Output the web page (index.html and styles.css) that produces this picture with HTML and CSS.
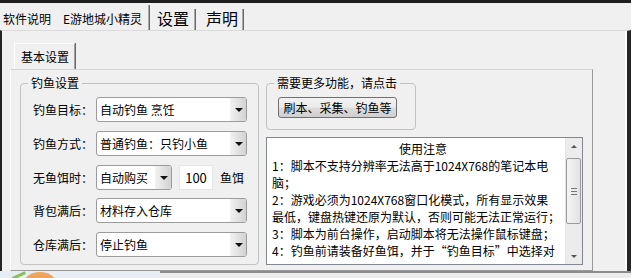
FILE: index.html
```html
<!DOCTYPE html>
<html lang="zh-CN">
<head>
    <meta charset="UTF-8">
    <title>E游地城小精灵</title>
    <link rel="stylesheet" href="styles.css">
</head>
<body>
    <div class="titlebar"></div>
    <div class="tabs">
        <div class="tab first">软件说明</div>
        <div class="tab active">E游地城小精灵</div>
        <div class="tab big">设置</div>
        <div class="tab big last">声明</div>
    </div>

    <div class="frame">
        <div class="subtabs">
            <div class="subtab">基本设置</div>
        </div>
        <div class="page">
            <div class="group fish">
                <span class="group-title">钓鱼设置</span>
                <div class="row">
                    <span class="label">钓鱼目标：</span>
                    <div class="combo"><span>自动钓鱼 烹饪</span><i class="drop"></i></div>
                </div>
                <div class="row">
                    <span class="label">钓鱼方式：</span>
                    <div class="combo"><span>普通钓鱼：只钓小鱼</span><i class="drop"></i></div>
                </div>
                <div class="row">
                    <span class="label">无鱼饵时：</span>
                    <div class="combo small"><span>自动购买</span><i class="drop"></i></div>
                    <div class="textbox">100</div>
                    <span class="unit">鱼饵</span>
                </div>
                <div class="row">
                    <span class="label">背包满后：</span>
                    <div class="combo"><span>材料存入仓库</span><i class="drop"></i></div>
                </div>
                <div class="row">
                    <span class="label">仓库满后：</span>
                    <div class="combo"><span>停止钓鱼</span><i class="drop"></i></div>
                </div>
            </div>

            <div class="side">
                <div class="group more">
                    <span class="group-title">需要更多功能，请点击</span>
                    <button class="btn">刷本、采集、钓鱼等</button>
                </div>
                <div class="notes">
                    <div class="notes-text">
                        <div class="notes-title">使用注意</div>
                        <div>1：脚本不支持分辨率无法高于1024X768的笔记本电</div>
                        <div>脑；</div>
                        <div>2：游戏必须为1024X768窗口化模式，所有显示效果</div>
                        <div>最低，键盘热键还原为默认，否则可能无法正常运行；</div>
                        <div>3：脚本为前台操作，启动脚本将无法操作鼠标键盘；</div>
                        <div>4：钓鱼前请装备好鱼饵，并于“钓鱼目标”中选择对</div>
                    </div>
                    <div class="scrollbar">
                        <div class="arrow up"></div>
                        <div class="thumb"><i></i><i></i><i></i></div>
                        <div class="track"></div>
                        <div class="arrow down"></div>
                    </div>
                </div>
            </div>
        </div>
    </div>

    <div class="footer">
        <div class="footer-pic"><span class="leaf"></span><span class="sun"></span></div>
        <div class="footer-rest"></div>
    </div>
</body>
</html>
```

FILE: styles.css
```css
* {
    box-sizing: border-box;
}
body {
    margin: 0;
    width: 631px;
    height: 278px;
    overflow: hidden;
    background-color: #f0f0f0;
    color: #000;
    font-family: "Noto Sans CJK SC", "Microsoft YaHei", sans-serif;
    font-size: 12px;
}
.titlebar {
    height: 3px;
    background-color: #1f1f1f;
}

/* top tab strip */
.tabs {
    display: flex;
    align-items: flex-end;
    height: 27px;
}
.tab {
    height: 21px;
    line-height: 20px;
    padding: 0 6px 0 8px;
    border-right: 1px solid #a9a9a9;
    box-shadow: 1px 0 0 #6a6a6a;
    white-space: nowrap;
}
.tab.first {
    width: 55px;
    padding-left: 3px;
    border-right: none;
    box-shadow: none;
}
.tab.active {
    width: 94px;
    height: 25px;
    line-height: 28px;
}
.tab.big {
    width: 46px;
    font-size: 16px;
    line-height: 19px;
    padding: 0 0 0 8px;
}
.tab.last {
    width: 48px;
    padding-left: 11px;
}

/* outer frame */
.frame {
    display: flex;
    flex-direction: column;
    height: 241px;
    padding: 12px 34px 0 8px;
    border-top: 1px solid #dadada;
    border-left: 2px solid #262626;
    border-right: 4px solid #262626;
    box-shadow: inset -2px 0 0 #fff;
}
.subtabs {
    display: flex;
    padding-left: 4px;
}
.subtab {
    width: 61px;
    height: 26px;
    line-height: 25px;
    padding-left: 6px;
    border-top: 1px solid #fff;
    border-left: 1px solid #fff;
    border-right: 1px solid #a0a0a0;
    box-shadow: 1px 0 0 #6a6a6a;
}
.page {
    display: flex;
    gap: 7px;
    height: 202px;
    padding: 13px 0 0 9px;
    border: 1px solid;
    border-color: #d4d4d4 #9a9a9a #9a9a9a #fff;
}

/* group boxes */
.group {
    position: relative;
    border: 1px solid #c2c2c2;
    border-radius: 4px;
}
.group-title {
    position: absolute;
    top: -9px;
    left: 7px;
    padding: 0 3px;
    line-height: 16px;
    background-color: #f0f0f0;
    white-space: nowrap;
}
.fish {
    display: flex;
    flex-direction: column;
    gap: 9px;
    width: 239px;
    height: 182px;
    padding: 13px 0 0 12px;
}
.row {
    display: flex;
    align-items: center;
    height: 25px;
}
.row:nth-child(5) {
    margin-top: -1px;
}
.label {
    width: 63px;
    white-space: nowrap;
}
.combo {
    display: flex;
    align-items: center;
    width: 151px;
    height: 25px;
    padding-left: 3px;
    background-color: #fff;
    border: 1px solid #9c9c9c;
    border-radius: 3px;
    overflow: hidden;
    white-space: nowrap;
}
.combo span {
    flex: 1;
}
.combo .drop {
    position: relative;
    width: 16px;
    height: 100%;
    background: linear-gradient(to right, #f2f2f2, #d2d2d2);
}
.combo .drop::after {
    content: "";
    position: absolute;
    left: 5px;
    top: 10px;
    border-left: 4px solid transparent;
    border-right: 4px solid transparent;
    border-top: 4px solid #111;
}
.combo.small {
    width: 76px;
}
.textbox {
    width: 34px;
    height: 25px;
    margin-left: 7px;
    line-height: 23px;
    text-align: center;
    font-size: 13px;
    background-color: #fff;
    border: 1px solid #e4e4e4;
}
.unit {
    margin-left: 7px;
}

/* right column */
.side {
    display: flex;
    flex-direction: column;
    gap: 7px;
    width: 317px;
}
.more {
    width: 150px;
    height: 47px;
    padding: 13px 0 0 11px;
}
.btn {
    width: 119px;
    height: 21px;
    padding: 0;
    font-family: inherit;
    font-size: 12px;
    color: #000;
    border: 1px solid #707070;
    border-radius: 3px;
    background: linear-gradient(#f2f2f2, #ebebeb 48%, #dddddd 52%, #cfcfcf);
}
.notes {
    display: flex;
    height: 128px;
    background-color: #fff;
    border: 1px solid #828790;
}
.notes-text {
    flex: 1;
    padding: 2px 0 0 5px;
    line-height: 17px;
    white-space: nowrap;
    overflow: hidden;
}
.notes-title {
    text-align: center;
    padding-left: 9px;
}
.scrollbar {
    display: flex;
    flex-direction: column;
    width: 17px;
    background-color: #ececec;
    border-left: 1px solid #e4e4e4;
}
.arrow {
    position: relative;
    height: 17px;
}
.arrow::after {
    content: "";
    position: absolute;
    left: 5px;
    border-left: 3px solid transparent;
    border-right: 3px solid transparent;
}
.arrow.up::after {
    top: 7px;
    border-bottom: 3px solid #555;
}
.arrow.down::after {
    top: 8px;
    border-top: 3px solid #555;
}
.thumb {
    display: flex;
    flex-direction: column;
    justify-content: center;
    align-items: center;
    gap: 2px;
    height: 66px;
    margin: 3px 1px 0 0;
    border: 1px solid #9b9b9b;
    border-radius: 2px;
    background: linear-gradient(to right, #f4f4f4, #e2e2e2);
}
.thumb i {
    display: block;
    width: 6px;
    height: 1px;
    background-color: #777;
}
.track {
    flex: 1;
}

/* strip of whatever sits below the window */
.footer {
    display: flex;
    height: 7px;
}
.footer-pic {
    position: relative;
    width: 160px;
    overflow: hidden;
    background-color: #e6eef3;
}
.sun {
    position: absolute;
    left: 24px;
    top: 1px;
    width: 32px;
    height: 22px;
    border-radius: 50%;
    background-color: #f0a35c;
}
.leaf {
    position: absolute;
    left: 12px;
    top: 3px;
    width: 14px;
    height: 3px;
    background-color: #8bbf5a;
    transform: rotate(-25deg);
}
.footer-rest {
    flex: 1;
    background-color: #ececec;
    border-top: 2px solid #8c8c8c;
}
```
